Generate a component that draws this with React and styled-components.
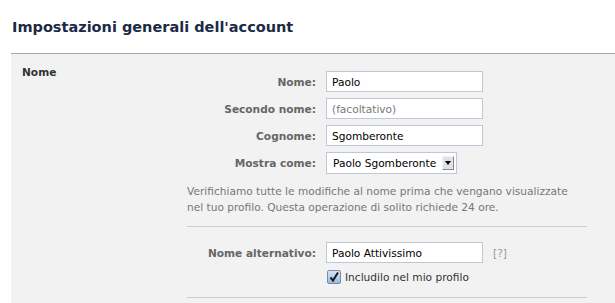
import React from "react";
import styled, { createGlobalStyle } from "styled-components";

const Global = createGlobalStyle`
  body {
    margin: 0;
    background: #fff;
    font-family: "DejaVu Sans", "Lucida Grande", sans-serif;
    font-size: 10.6px;
    color: #333;
  }
`;

const Page = styled.div`
  width: 615px;
  height: 303px;
  overflow: hidden;
`;

const Title = styled.h2`
  margin: 0 0 0 11px;
  padding: 19px 0 0 1px;
  height: 34px;
  box-sizing: content-box;
  font-size: 14.5px;
  font-weight: bold;
  line-height: 17px;
  color: #1c2a47;
  border-bottom: 1px solid #aaa;
`;

const Panel = styled.div`
  margin-left: 11px;
  background: #f2f2f2;
  display: grid;
  grid-template-columns: 165px 1fr;
  padding: 11px 0 0 11px;
  min-height: 260px;
`;

const SectionLabel = styled.div`
  font-weight: bold;
  color: #333;
  padding-top: 1px;
`;

const Form = styled.div`
  display: flex;
  flex-direction: column;
  width: 400px;
`;

const Row = styled.div`
  display: grid;
  grid-template-columns: 129px 157px auto;
  column-gap: 10px;
  align-items: center;
  margin-top: ${({ $top = 0 }) => $top}px;
  margin-bottom: ${({ $bottom = 6 }) => $bottom}px;
`;

const Label = styled.label`
  text-align: right;
  font-weight: bold;
  color: #666;
`;

const Input = styled.input`
  box-sizing: border-box;
  height: 21px;
  width: 157px;
  border: 1px solid #bdc7d8;
  padding: 0 5px;
  font: inherit;
  color: #000;
  background: #fff;
  &::placeholder {
    color: #777;
  }
`;

const Select = styled.div`
  box-sizing: border-box;
  height: 22px;
  width: 131px;
  border: 1px solid #bdc7d8;
  background: #fff;
  display: flex;
  align-items: center;
  justify-content: space-between;
  padding: 0 2px 0 6px;
  color: #000;
`;

const Arrow = styled.span`
  width: 12px;
  height: 14px;
  box-sizing: border-box;
  border: 1px solid #999;
  border-color: #f4f4f4 #888 #888 #f4f4f4;
  background: #e2e2e2;
  display: flex;
  align-items: center;
  justify-content: center;
  &::after {
    content: "";
    border-left: 3px solid transparent;
    border-right: 3px solid transparent;
    border-top: 4px solid #000;
  }
`;

const Note = styled.p`
  margin: 9px 0 0;
  color: #777;
  line-height: 16px;
  width: 400px;
`;

const Divider = styled.hr`
  border: 0;
  border-top: 1px solid #ccc;
  margin: ${({ $top }) => $top}px 0 0;
  width: 400px;
`;

const Help = styled.span`
  color: #999;
`;

const CheckRow = styled.label`
  display: flex;
  align-items: center;
  gap: 4px;
  margin-left: 140px;
  color: #333;
`;

const Box = styled.span`
  width: 12px;
  height: 12px;
  border: 1px solid #7a8aa8;
  border-radius: 2px;
  background: linear-gradient(#d6e4f7, #9bb9e3);
  display: inline-flex;
  align-items: center;
  justify-content: center;
`;

export default function App() {
  return (
    <Page>
      <Global />
      <Title>Impostazioni generali dell'account</Title>
      <Panel>
        <SectionLabel>Nome</SectionLabel>
        <Form>
          <Row $top={6}>
            <Label>Nome:</Label>
            <Input defaultValue="Paolo" />
          </Row>
          <Row>
            <Label>Secondo nome:</Label>
            <Input placeholder="(facoltativo)" />
          </Row>
          <Row>
            <Label>Cognome:</Label>
            <Input defaultValue="Sgomberonte" />
          </Row>
          <Row $bottom={0}>
            <Label>Mostra come:</Label>
            <Select>
              Paolo Sgomberonte
              <Arrow />
            </Select>
          </Row>
          <Note>
            Verifichiamo tutte le modifiche al nome prima che vengano visualizzate
            <br />
            nel tuo profilo. Questa operazione di solito richiede 24 ore.
          </Note>
          <Divider $top={11} />
          <Row $top={15} $bottom={7}>
            <Label>Nome alternativo:</Label>
            <Input defaultValue="Paolo Attivissimo" />
            <Help>[?]</Help>
          </Row>
          <CheckRow>
            <Box>
              <svg width="12" height="12" viewBox="0 0 12 12">
                <path d="M2.5 6.5 L5 9.5 L10 1.5" stroke="#1a1a1a" strokeWidth="2" fill="none" />
              </svg>
            </Box>
            Includilo nel mio profilo
          </CheckRow>
          <Divider $top={13} />
        </Form>
      </Panel>
    </Page>
  );
}
